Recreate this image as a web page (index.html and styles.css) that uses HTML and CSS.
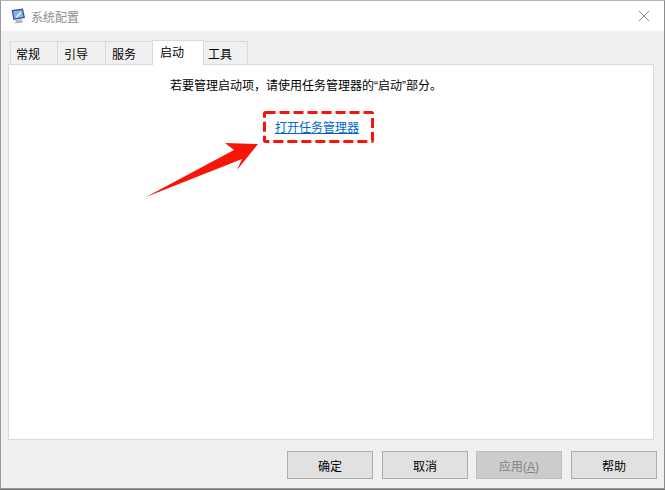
FILE: index.html
```html
<!DOCTYPE html>
<html lang="zh-CN">
<head>
  <meta charset="UTF-8" />
  <title>系统配置</title>
  <link rel="stylesheet" href="styles.css">
</head>
<body>

<div class="window">
  <div class="titlebar">
    <svg class="app-icon" viewBox="0 0 16 16" width="16" height="16" aria-hidden="true">
      <path d="M1.5 2 L13 0.5 L15 10 L3.5 12 Z" fill="#3f4f92"/>
      <path d="M3 3.2 L12 2 L13.5 9 L4.6 10.5 Z" fill="#79b6ee"/>
      <path d="M5.5 9.4 L10.5 3.5 L11.5 4.5 L7.5 9.2 Z" fill="#f2f8fd"/>
      <path d="M6 12 L11 11 L13.5 14.5 L5 15.5 Z" fill="#b5b8be"/>
    </svg>
    <span class="title">系统配置</span>
    <svg class="close" viewBox="0 0 10 10" width="10" height="10" aria-hidden="true">
      <path d="M0 0 L10 10 M10 0 L0 10" stroke="#8a8a8a" stroke-width="1" fill="none"/>
    </svg>
  </div>

  <div class="body">
    <div class="tabs">
      <div class="tab">常规</div>
      <div class="tab">引导</div>
      <div class="tab">服务</div>
      <div class="tab active">启动</div>
      <div class="tab">工具</div>
    </div>

    <div class="panel">
      <p class="hint">若要管理启动项，请使用任务管理器的“启动”部分。</p>
      <a class="link" href="#">打开任务管理器</a>

      <!-- 标注 -->
      <svg class="mark-box" viewBox="0 0 111 32" width="111" height="32" aria-hidden="true">
        <rect x="1.5" y="1.5" width="108" height="29" rx="1" fill="none" stroke="#f9140a" stroke-width="3" stroke-dasharray="10 4"/>
      </svg>
      <svg class="mark-arrow" viewBox="0 0 116 58" width="116" height="58" aria-hidden="true">
        <path d="M0 57 L88 10 L79 3 L112 4 L91 30 L96 19 Z" fill="#f9140a"/>
      </svg>
    </div>

    <div class="buttons">
      <button class="btn">确定</button>
      <button class="btn">取消</button>
      <button class="btn disabled">应用(<u>A</u>)</button>
      <button class="btn">帮助</button>
    </div>
  </div>
</div>

</body>
</html>
```

FILE: styles.css
```css
* {
  box-sizing: border-box;
}

body {
  margin: 0;
  width: 665px;
  height: 490px;
  overflow: hidden;
  background: #6f6f6f;
  font-family: "Liberation Sans", "Noto Sans CJK SC", sans-serif;
  font-size: 12px;
  color: #000;
}

.window {
  width: 665px;
  height: 489px;
  border-top: 1px solid #b4b4b4;
  border-left: 1px solid #9a9a9a;
  border-right: 1px solid #8c8c8c;
  border-bottom: 1px solid #9a9a9a;
  display: flex;
  flex-direction: column;
}

.titlebar {
  height: 30px;
  padding: 0 15px 0 9px;
  background: #fff;
  display: flex;
  align-items: center;
}

.app-icon {
  margin-right: 5px;
}

.title {
  font-size: 12px;
  color: #8f8f8f;
}

.close {
  margin-left: auto;
}

.body {
  flex: 1;
  background: #f0f0f0;
  padding: 9px 7px 0 7px;
  display: flex;
  flex-direction: column;
}

.tabs {
  height: 24px;
  padding-left: 2px;
  display: flex;
  align-items: flex-end;
  position: relative;
  z-index: 1;
}

.tab {
  height: 23px;
  width: 48px;
  margin-left: -1px;
  border: 1px solid #d9d9d9;
  border-bottom: none;
  background: #f0f0f0;
  display: flex;
  align-items: center;
  padding-left: 6px;
}

.tab:first-child {
  margin-left: 0;
  padding-left: 5px;
}

.tab:nth-child(2) {
  width: 49px;
}

.tab:last-child {
  width: 45px;
  padding-left: 4px;
}

.tab.active {
  height: 25px;
  width: 52px;
  margin-bottom: -1px;
  padding-left: 7px;
  padding-bottom: 3px;
  background: #fff;
}

.panel {
  position: relative;
  width: 646px;
  height: 376px;
  background: #fff;
  border: 1px solid #d9d9d9;
  display: flex;
  flex-direction: column;
  align-items: flex-start;
}

.hint {
  margin: 12px 0 0 161px;
  line-height: 18px;
  white-space: nowrap;
}

.link {
  margin: 24px 0 0 266px;
  line-height: 18px;
  color: #0066cc;
}

.mark-box {
  position: absolute;
  left: 254px;
  top: 46px;
}

.mark-arrow {
  position: absolute;
  left: 137px;
  top: 75px;
}

.buttons {
  margin-top: 11px;
  display: flex;
  justify-content: flex-end;
  gap: 9px;
}

.btn {
  width: 86px;
  height: 28px;
  padding: 0;
  border: 1px solid #adadad;
  background: #e1e1e1;
  font: inherit;
  color: #000;
}

.btn.disabled {
  margin-left: -1px;
  background: #cccccc;
  border-color: #bfbfbf;
  color: #838383;
}
```
